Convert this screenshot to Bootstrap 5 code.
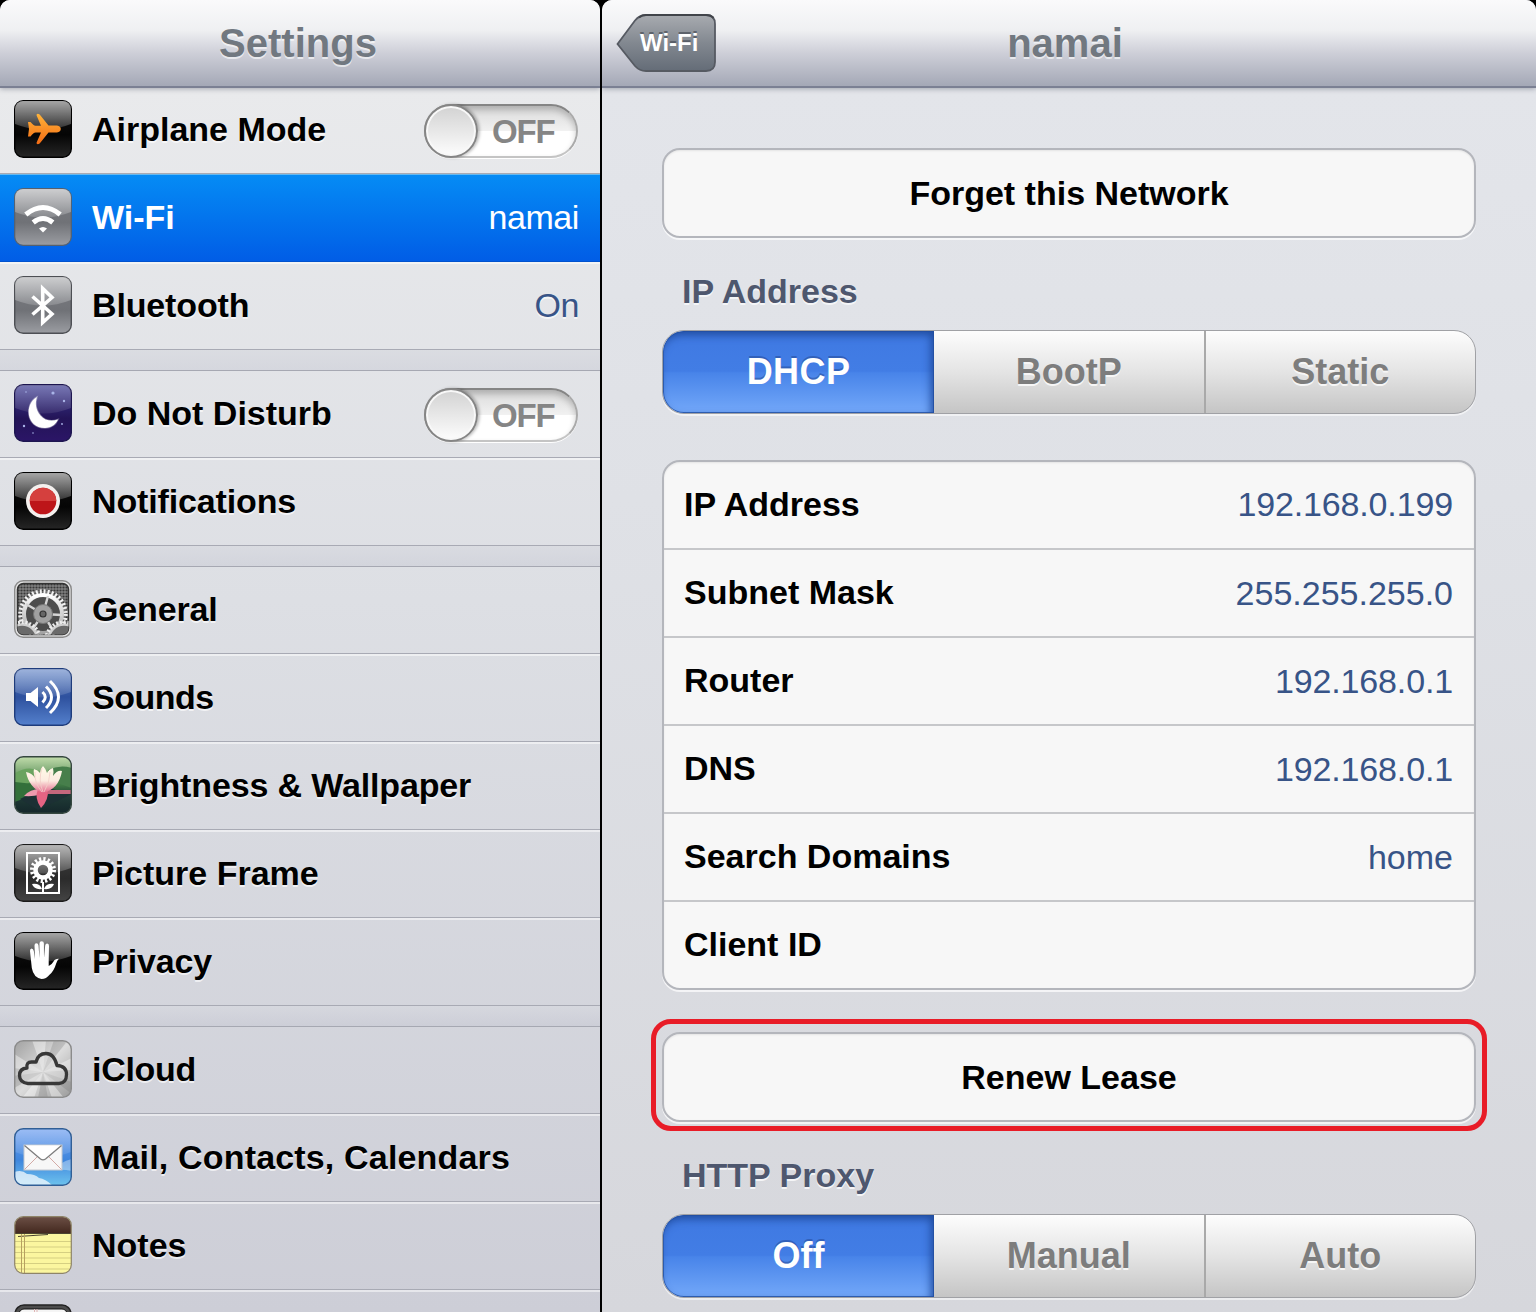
<!DOCTYPE html>
<html lang="en">
<head>
<meta charset="utf-8">
<meta name="viewport" content="width=device-width, initial-scale=1">
<title>Settings</title>
<link href="https://cdn.jsdelivr.net/npm/bootstrap@5.3.0/dist/css/bootstrap.min.css" rel="stylesheet">
<style>
body{font-family:"Liberation Sans",Arial,sans-serif;font-size:34px;line-height:40px;color:#000;background:#000;height:1312px;overflow:hidden}
.app-shell{height:1312px;gap:2px}
.side-pane{width:600px;background:linear-gradient(#e9eaec 88px,#dddfe4 600px,#cdced7 1312px)}
.main-pane{background:linear-gradient(#e3e5ea 88px,#dfe1e6 500px,#d6d7dc 1312px)}
.side-pane,.main-pane{border-radius:10px 10px 0 0;overflow:hidden}
.title-bar{height:88px;background:linear-gradient(#fafafb 0,#eff0f2 30px,#cfd0d9 52px,#a4a8b6 86px);border-bottom:2px solid #7b8093;box-shadow:0 1px 5px rgba(60,65,85,.4);z-index:2;font-size:40px;color:#717880;text-shadow:0 2px 0 rgba(255,255,255,.6)}
.back-btn{left:14px;top:13px;width:102px;height:60px;color:#fff;font-size:24px;text-shadow:0 -2px 0 rgba(60,65,75,.6)}
.back-btn svg{left:0;top:0}
.back-btn span{left:24px;top:10px}
.menu-group{border-top:1px solid #a6a8b2}
.menu-group:first-child{border-top:0;margin-top:-2px}
.menu-row{height:88px;padding:0 21px 0 14px;border-bottom:1px solid #a8aab4;box-shadow:inset 0 2px 0 rgba(255,255,255,.5);text-shadow:0 2px 0 rgba(255,255,255,.65)}
.menu-group:not(:first-child) .menu-row:first-child{height:87px;box-shadow:none}
.menu-row>svg{width:58px;height:58px}
.menu-row{padding-bottom:1px}
.menu-group:not(:first-child) .menu-row:first-child{padding-bottom:2px}
.menu-row.picked{background:linear-gradient(#058cf5,#015de6);border-bottom-color:#0152ce;box-shadow:inset 0 1px 0 #67b9ee;color:#fff;text-shadow:none}
.menu-row.picked .row-val{color:#fff}
.menu-gap{height:20px;background:linear-gradient(rgba(215,217,223,.7),rgba(195,197,209,.42))}
.row-val{color:#385487}
.menu-row .row-val{letter-spacing:-.4px}
.pill{width:154px;height:54px;border-radius:27px;border:2px solid #aaa;border-top-color:#858585;border-bottom-color:#c4c4c4;background:linear-gradient(#dadada,#f1f1f1 49%,#fff 51%);box-shadow:inset 0 4px 6px rgba(0,0,0,.2),0 1px 0 #fff;margin:4px 1px 0 0;line-height:52px;color:#858585;font-size:33px;letter-spacing:-1.2px;padding-left:66px;text-shadow:none}
.pill-knob{left:-2px;top:-2px;width:54px;height:54px;border-radius:50%;background:linear-gradient(#d2d2d2,#fdfdfd);border:2px solid #858585;box-shadow:inset 0 0 0 2px #f8f8f8,2px 0 3px rgba(0,0,0,.25)}
.content-col{padding:60px 60px 0}
.cell-box{background:#f7f7f7;border:2px solid #b4b6bc;border-radius:18px;box-shadow:0 2px 0 rgba(255,255,255,.7),inset 0 1px 2px rgba(0,0,0,.08)}
.one-btn{height:90px}
.sec-title{font-size:34px;line-height:40px;color:#4e576e;text-shadow:0 2px 0 #f4f5f7;height:40px;padding-left:20px;margin-top:33px}
.proxy-title{margin-top:24px}
.sec-title+.seg-bar{margin-top:19px}
.seg-bar+.info-list{margin-top:46px}
.seg-bar{height:84px;border-radius:22px;border:1px solid #a0a1a5;box-shadow:0 2px 0 rgba(255,255,255,.55);overflow:hidden;font-size:36px;background:linear-gradient(#fdfdfd,#e4e4e4 50%,#c5c5c5)}
.seg-item{flex:1 1 0;color:#7d7d7d;text-shadow:0 2px 0 #f6f6f6}
.seg-item.on{flex:0 0 271px;color:#fff;background:linear-gradient(#3f79e2,#427de5 49%,#4884e9 51%,#73a8f9);box-shadow:inset -3px 4px 8px #204c9f,inset 0 0 0 1px #315fb1;text-shadow:0 -2px 0 rgba(35,70,145,.5);border-radius:21px 0 0 21px}
.seg-item:last-child{border-left:2px solid #a9a9a9}
.wide-cap{letter-spacing:.4px}
.info-list{height:530px}
.info-row{height:88px;padding:0 21px 1px 20px;border-bottom:2px solid #c6c7ca}
.info-row b{margin-top:-1px}
.info-row:first-child{padding-bottom:2px}
.info-row:last-child{border:0;height:86px}
.ring-mark{border:5px solid #e81c27;border-radius:20px;padding:8px 6px 4px;margin:29px -11px 0}
.snug{letter-spacing:-.14px}
.loose{letter-spacing:.17px}
</style>
<script src="https://cdn.jsdelivr.net/npm/bootstrap@5.3.0/dist/js/bootstrap.bundle.min.js"></script>
</head>
<body>
<svg width="0" height="0" class="position-absolute">
<defs>
<linearGradient id="shine" x1="0" y1="0" x2="0" y2="1"><stop offset="0" stop-color="#fff" stop-opacity=".62"/><stop offset="1" stop-color="#fff" stop-opacity=".16"/></linearGradient>
<linearGradient id="gGray" x1="0" y1="0" x2="0" y2="1"><stop offset="0" stop-color="#7b7d82"/><stop offset=".6" stop-color="#707277"/><stop offset="1" stop-color="#9b9da2"/></linearGradient>
<linearGradient id="gNight" x1="0" y1="0" x2="0" y2="1"><stop offset="0" stop-color="#3c3c94"/><stop offset=".6" stop-color="#231457"/><stop offset="1" stop-color="#2b1567"/></linearGradient>
<linearGradient id="gSound" x1="0" y1="0" x2="0" y2="1"><stop offset="0" stop-color="#5a7fc4"/><stop offset=".5" stop-color="#2e519e"/><stop offset="1" stop-color="#5480cc"/></linearGradient>
<linearGradient id="gPlane" x1="0" y1="0" x2="0" y2="1"><stop offset="0" stop-color="#ffb43a"/><stop offset="1" stop-color="#f36b14"/></linearGradient>
<linearGradient id="gBlack" x1="0" y1="0" x2="0" y2="1"><stop offset="0" stop-color="#151515"/><stop offset=".6" stop-color="#050505"/><stop offset="1" stop-color="#262626"/></linearGradient>
<linearGradient id="gFrame" x1="0" y1="0" x2="0" y2="1"><stop offset="0" stop-color="#444"/><stop offset=".6" stop-color="#2b2b2b"/><stop offset="1" stop-color="#444"/></linearGradient>
<linearGradient id="gSky" x1="0" y1="0" x2="0" y2="1"><stop offset="0" stop-color="#6f9ff0"/><stop offset=".55" stop-color="#3f86dd"/><stop offset="1" stop-color="#6fc4ee"/></linearGradient>
<linearGradient id="gGear" x1="0" y1="0" x2="0" y2="1"><stop offset="0" stop-color="#fff"/><stop offset="1" stop-color="#a2a2a2"/></linearGradient>
<linearGradient id="gWood" x1="0" y1="0" x2="0" y2="1"><stop offset="0" stop-color="#6d5147"/><stop offset="1" stop-color="#44291f"/></linearGradient>
<linearGradient id="gPetal" x1="0" y1="0" x2="0" y2="1"><stop offset="0" stop-color="#fffbe8"/><stop offset=".55" stop-color="#fcebe0"/><stop offset="1" stop-color="#e3668a"/></linearGradient>
<linearGradient id="gPond" x1="0" y1="0" x2="0" y2="1"><stop offset="0" stop-color="#c5dfae"/><stop offset=".5" stop-color="#3f7a44"/><stop offset=".7" stop-color="#1f3a36"/><stop offset="1" stop-color="#14262a"/></linearGradient>
<linearGradient id="gBack" x1="0" y1="0" x2="0" y2="1"><stop offset="0" stop-color="#a8abb0"/><stop offset=".5" stop-color="#828890"/><stop offset="1" stop-color="#646c77"/></linearGradient>
<linearGradient id="gMetal" x1="0" y1="0" x2="1" y2="1"><stop offset="0" stop-color="#a0a0a0"/><stop offset=".5" stop-color="#dcdcdc"/><stop offset="1" stop-color="#999"/></linearGradient>
<pattern id="mesh" width="3" height="3" patternUnits="userSpaceOnUse"><rect width="3" height="3" fill="#808080"/><circle cx="1.5" cy="1.5" r="1.1" fill="#383838"/></pattern>
<clipPath id="tile"><rect x="1" y="1" width="56" height="56" rx="8"/></clipPath>
<clipPath id="gearTile"><rect x="3.5" y="3.5" width="51" height="51" rx="6"/></clipPath>
<path id="gloss" d="M1 1H57V24Q29 35 1 24Z" fill="url(#shine)" clip-path="url(#tile)"/>
</defs>
</svg>
<div class="app-shell d-flex">
<aside class="side-pane flex-shrink-0">
<header class="title-bar position-relative d-flex align-items-center justify-content-center fw-bold pe-1">Settings</header>
<nav>
<div class="menu-group">
<div class="menu-row d-flex align-items-center">
<svg viewBox="0 0 58 58"><rect x=".7" y=".7" width="56.6" height="56.6" rx="8.5" fill="url(#gBlack)" stroke="#000" stroke-width="1.4"/><use href="#gloss"/><path d="M14 22h2.500q3 3.500 5 3.700h5.500L22.600 15.500q-.4-1.700 1.200-1.700 1.700 0 2.700 1.700L34.500 25.500H43q3.800.6 3.800 3.500t-3.800 3.500H34.500L26.500 42.500q-1 1.700-2.700 1.700-1.600 0-1.200-1.700L27 32.500h-5.500q-2 .2-5 4H14l1-7.500Z" fill="url(#gPlane)"/></svg>
<span class="fw-bold ms-3 ps-1 flex-grow-1">Airplane Mode</span><div class="pill position-relative fw-bold"><div class="pill-knob position-absolute"></div>OFF</div></div>
<div class="menu-row picked d-flex align-items-center">
<svg viewBox="0 0 58 58"><rect x=".7" y=".7" width="56.6" height="56.6" rx="8.5" fill="url(#gGray)" stroke="#55606e" stroke-width="1.2"/><use href="#gloss"/><g fill="none" stroke="#fff" stroke-width="5"><path d="M11.800 26.500Q29 12.500 46.200 26.500"/><path d="M19.200 34.500Q29 26.500 38.800 34.500"/></g><path d="M25 40.500q4-3 8 0L29 44.500Z" fill="#fff"/></svg>
<span class="fw-bold ms-3 ps-1 flex-grow-1">Wi-Fi</span><span class="row-val">namai</span></div>
<div class="menu-row d-flex align-items-center">
<svg viewBox="0 0 58 58"><rect x=".7" y=".7" width="56.6" height="56.6" rx="8.5" fill="url(#gGray)" stroke="#4d4f54" stroke-width="1.4"/><use href="#gloss"/><path d="M18.500 20.500L38 38l-9.300 8.500v-34L38 21.500 18.500 38.500" fill="none" stroke="#fff" stroke-width="3.600"/></svg>
<span class="fw-bold ms-3 ps-1 flex-grow-1 snug">Bluetooth</span><span class="row-val">On</span></div>
</div>
<div class="menu-gap"></div>
<div class="menu-group">
<div class="menu-row d-flex align-items-center">
<svg viewBox="0 0 58 58"><rect x=".7" y=".7" width="56.6" height="56.6" rx="8.500" fill="url(#gNight)" stroke="#1d1650" stroke-width="1.4"/><path d="M1 1H57V24Q29 35 1 24Z" fill="url(#shine)" opacity=".5" clip-path="url(#tile)"/><g fill="#a9b4e8"><circle cx="39" cy="9" r="1.600"/><circle cx="50" cy="17" r="1.200"/><circle cx="12" cy="8" r=".8"/><circle cx="10" cy="42" r="1.200"/><circle cx="48" cy="40" r=".9"/><circle cx="19" cy="49" r=".8"/></g><path d="M23 13C10 20 12 44 31 44c6.500 0 11-4 13-8.500-6 2-13 1.500-17.500-4C21.500 25.500 21 19 23 13Z" fill="#fff" stroke="#fff" stroke-opacity=".35" stroke-width="1.500"/></svg>
<span class="fw-bold ms-3 ps-1 flex-grow-1">Do Not Disturb</span><div class="pill position-relative fw-bold"><div class="pill-knob position-absolute"></div>OFF</div></div>
<div class="menu-row d-flex align-items-center">
<svg viewBox="0 0 58 58"><rect x=".7" y=".7" width="56.6" height="56.6" rx="8.500" fill="url(#gBlack)" stroke="#000" stroke-width="1.4"/><use href="#gloss"/><circle cx="29" cy="29" r="17" fill="#f4f0ee"/><circle cx="29" cy="29" r="13.300" fill="#bd1519"/><path d="M15.700 29a13.300 13.300 0 0 1 26.600 0Z" fill="#d5403e"/></svg>
<span class="fw-bold ms-3 ps-1 snug">Notifications</span></div>
</div>
<div class="menu-gap"></div>
<div class="menu-group">
<div class="menu-row d-flex align-items-center">
<svg viewBox="0 0 58 58"><rect x=".7" y=".7" width="56.6" height="56.6" rx="8.500" fill="#e2e2e2" stroke="#8b8b8b" stroke-width="1.400"/><rect x="3.500" y="3.500" width="51" height="51" rx="6" fill="url(#mesh)" stroke="#333" stroke-width="1.500"/><g clip-path="url(#gearTile)"><circle cx="29" cy="34" r="18" fill="#4d4d4d"/><circle cx="29" cy="34" r="22.500" fill="none" stroke="#f2f2f2" stroke-width="4.500" stroke-dasharray="1.927 2"/><circle cx="29" cy="34" r="19" fill="none" stroke="url(#gGear)" stroke-width="4"/><g stroke="#d5d5d5" stroke-width="2.400"><path d="M29 34 34 16M29 34 48 35M29 34 39 50M29 34 18 50M29 34 12 24"/></g><circle cx="29" cy="34" r="9.500" fill="#a0a0a0" stroke="#777"/><circle cx="29" cy="34" r="3" fill="#666" stroke="#333" stroke-width="1.200"/><g fill="#6a6a6a" stroke="#d0d0d0" stroke-width="2.500"><circle cx="8" cy="60" r="15.500"/><circle cx="50" cy="60" r="15.500"/></g><g fill="none" stroke="#eee" stroke-width="3.500" stroke-dasharray="1.900 1.917"><circle cx="8" cy="60" r="18"/><circle cx="50" cy="60" r="18"/></g></g></svg>
<span class="fw-bold ms-3 ps-1 snug">General</span></div>
<div class="menu-row d-flex align-items-center">
<svg viewBox="0 0 58 58"><rect x=".7" y=".7" width="56.6" height="56.6" rx="8.500" fill="url(#gSound)" stroke="#1e3c7c" stroke-width="1.400"/><path d="M1 1H57V24Q29 35 1 24Z" fill="url(#shine)" opacity=".65" clip-path="url(#tile)"/><path d="M12 25h4.500L24 19v20l-7.500-6H12Z" fill="#fff"/><g fill="none" stroke="#fff" stroke-width="3"><path d="M28.500 24q5.500 5 0 10.500"/><path d="M32 18.500q11 10.500 0 21.500"/><path d="M36 13q17 16 0 32"/></g></svg>
<span class="fw-bold ms-3 ps-1" style="letter-spacing:-.5px">Sounds</span></div>
<div class="menu-row d-flex align-items-center">
<svg viewBox="0 0 58 58"><g clip-path="url(#tile)"><rect width="58" height="58" fill="url(#gPond)"/><path d="M0 18Q14 8 28 16L30 20 0 34Z" fill="#6aa35f"/><path d="M34 14q12-6 24-2v20l-18-6Z" fill="#477f4b"/><path d="M0 26 20 28 12 42 0 46Z" fill="#33703a"/><path d="M6 43 30 31 58 38 24 54Z" fill="#1c3034"/><path d="M34 34 58 34V38L34 38Z" fill="#c4677c"/><path d="M10 40q6-7 16-7l8 2q-8 6-24 5Z" fill="#ee9aae"/><path d="M24 33q-4 9 3 19 8-8 7-19Z" fill="#e56483"/><path d="M29 37Q15 32 12 16q6 1 9 6-2-6-1-9 4 1 6 4 0-4 3-7 3 3 4 7 2-4 6-5 1 4 0 8 4-6 9-5-3 18-19 22Z" fill="url(#gPetal)"/><path d="M28 36Q20 27 21 16M29 36Q24 24 28 12M30 36Q36 26 36 16" fill="none" stroke="#f3cfc8" stroke-width=".8"/></g><rect x=".7" y=".7" width="56.6" height="56.6" rx="8.500" fill="none" stroke="#35473f" stroke-width="1.400"/></svg>
<span class="fw-bold ms-3 ps-1 snug">Brightness &amp; Wallpaper</span></div>
<div class="menu-row d-flex align-items-center">
<svg viewBox="0 0 58 58"><rect x=".7" y=".7" width="56.6" height="56.6" rx="8.500" fill="url(#gFrame)" stroke="#1b1b1b" stroke-width="1.400"/><use href="#gloss"/><rect x="13" y="9" width="32" height="40" fill="none" stroke="#fff" stroke-width="2"/><circle cx="29" cy="26" r="7.500" fill="none" stroke="#fff" stroke-width="4.500"/><circle cx="29" cy="26" r="11" fill="none" stroke="#fff" stroke-width="4" stroke-dasharray="2.200 2.120"/><path d="M29 38V49" stroke="#fff" stroke-width="2"/><path d="M18 40q8-1 10 5-8 1-10-5ZM40 40q-8-1-10 5 8 1 10-5Z" fill="#fff"/></svg>
<span class="fw-bold ms-3 ps-1">Picture Frame</span></div>
<div class="menu-row d-flex align-items-center">
<svg viewBox="0 0 58 58"><rect x=".7" y=".7" width="56.6" height="56.6" rx="8.500" fill="url(#gBlack)" stroke="#000" stroke-width="1.400"/><use href="#gloss"/><path d="M17.800 36 16 19q-.1-2.500 1.600-2.500t2.200 2.500L21 27 20.500 13.500q0-2.300 1.900-2.300t2.100 2.300L25.500 26V11.500q0-2.200 2.200-2.200t2.200 2.200L30 26l1.200-12.500q.3-2 2.100-1.900t1.700 2.300L34.700 29v5q3.300-1.500 4.800-4.500t5.300-2.800q-1.500 1.500-2.800 5.300-2 7-6.500 10.800-3.200 4.200-8 4.200-8-1.500-9.700-11Z" fill="#fff"/></svg>
<span class="fw-bold ms-3 ps-1 snug">Privacy</span></div>
</div>
<div class="menu-gap"></div>
<div class="menu-group">
<div class="menu-row d-flex align-items-center">
<svg viewBox="0 0 58 58"><g clip-path="url(#tile)"><rect width="58" height="58" fill="url(#gMetal)"/><g fill="#fff" opacity=".4"><path d="M29 32 18 0H32ZM29 32 0 14V28ZM29 32 58 18V30ZM29 32 8 58H20ZM29 32 38 58H50Z"/></g><g fill="#777" opacity=".28"><path d="M29 32 40 0H54ZM29 32 0 36V48ZM29 32 58 42V54ZM29 32 24 58H34Z"/></g></g><rect x=".7" y=".7" width="56.600" height="56.600" rx="8.500" fill="none" stroke="#8b8b8b" stroke-width="1.400"/><path d="M14 43.500Q5.500 42.500 5.500 35.500T13 28Q12 22 17.500 22T22 22Q24 13.500 32 13.500T43 25.500Q52.500 26 52.500 34.500T45 43.500Z" fill="#ddd" fill-opacity=".45" stroke="#383838" stroke-width="3.300" stroke-linejoin="round"/></svg>
<span class="fw-bold ms-3 ps-1" style="letter-spacing:-.3px">iCloud</span></div>
<div class="menu-row d-flex align-items-center">
<svg viewBox="0 0 58 58"><g clip-path="url(#tile)"><rect width="58" height="58" fill="url(#gSky)"/><path d="M1 1H57V24Q29 35 1 24Z" fill="url(#shine)" opacity=".5"/><g fill="#fff" opacity=".7"><path d="M0 44q8-3 13 2 8 0 12 4 7 1 14 8H0Z"/><path d="M41 42q6-9 17-11v12q-8-2-17-1Z" opacity=".5"/></g></g><rect x=".7" y=".7" width="56.6" height="56.6" rx="8.500" fill="none" stroke="#315f96" stroke-width="1.400"/><rect x="10" y="17" width="38" height="25" fill="#f7f7f7" stroke="#c2c7cf"/><path d="M10.500 41.500 23 29M47.500 41.500 35 29" stroke="#d3aaa6"/><path d="M10.500 17.500 26.500 31q2.500 1.800 5 0L47.500 17.500" fill="#fff" stroke="#7d7d7d" stroke-width="1.300"/></svg>
<span class="fw-bold ms-3 ps-1 loose">Mail, Contacts, Calendars</span></div>
<div class="menu-row d-flex align-items-center">
<svg viewBox="0 0 58 58"><g clip-path="url(#tile)"><rect width="58" height="58" fill="#fbf69f"/><rect width="58" height="17" fill="url(#gWood)"/><path d="M1 17.500H57M4 20.500 34 18.500" stroke="#4b4430" stroke-width="1.200"/><path d="M1 25.500H57M1 31H57M1 36.500H57M1 42H57M1 47.500H57M1 53H57" stroke="#d5cf82"/><path d="M7.500 18V57M10.500 18V57" stroke="#b7a160"/></g><rect x=".7" y=".7" width="56.6" height="56.6" rx="8.500" fill="none" stroke="#8e8468" stroke-width="1.200"/></svg>
<span class="fw-bold ms-3 ps-1">Notes</span></div>
<div class="menu-row d-flex align-items-center">
<svg viewBox="0 0 58 58"><rect x="1" y="1" width="56" height="56" rx="9" fill="#4c4c4c" stroke="#222" stroke-width="1.500"/><rect x="5" y="5" width="48" height="50" rx="5" fill="#f5f5f5" stroke="#111"/><path d="M20.500 5V55M23 5V55" stroke="#dfb5b5"/></svg>
</div>
</div>
</nav>
</aside>
<main class="main-pane flex-grow-1">
<header class="title-bar position-relative d-flex align-items-center justify-content-center fw-bold">
<a class="back-btn position-absolute text-decoration-none"><svg class="position-absolute" width="102" height="60" viewBox="0 0 102 60"><path d="M1.500 31 19 7.500Q23.500 2 30 2H90Q99 2 99 11V49Q99 58 90 58H30Q23.500 58 19 53Z" fill="url(#gBack)" stroke="#565a62" stroke-width="1.800"/><path d="M23 4.500Q26 2 30 2H90Q95 2 97.500 5" fill="none" stroke="#41444a" stroke-width="2"/></svg><span class="position-absolute">Wi-Fi</span></a>
<span class="me-2">namai</span></header>
<div class="content-col">
<div class="cell-box one-btn d-flex align-items-center justify-content-center fw-bold">Forget this Network</div>
<h2 class="sec-title fw-bold mb-0">IP Address</h2>
<div class="seg-bar d-flex fw-bold">
<div class="seg-item on d-flex align-items-center justify-content-center"><span class="wide-cap">DHCP</span></div>
<div class="seg-item d-flex align-items-center justify-content-center">BootP</div>
<div class="seg-item d-flex align-items-center justify-content-center">Static</div>
</div>
<div class="cell-box info-list">
<div class="info-row d-flex align-items-center justify-content-between"><b>IP Address</b><span class="row-val snug">192.168.0.199</span></div>
<div class="info-row d-flex align-items-center justify-content-between"><b>Subnet Mask</b><span class="row-val">255.255.255.0</span></div>
<div class="info-row d-flex align-items-center justify-content-between"><b>Router</b><span class="row-val snug">192.168.0.1</span></div>
<div class="info-row d-flex align-items-center justify-content-between"><b>DNS</b><span class="row-val snug">192.168.0.1</span></div>
<div class="info-row d-flex align-items-center justify-content-between"><b>Search Domains</b><span class="row-val">home</span></div>
<div class="info-row d-flex align-items-center"><b>Client ID</b></div>
</div>
<div class="ring-mark"><div class="cell-box one-btn d-flex align-items-center justify-content-center fw-bold">Renew Lease</div></div>
<h2 class="sec-title proxy-title fw-bold mb-0">HTTP Proxy</h2>
<div class="seg-bar d-flex fw-bold">
<div class="seg-item on d-flex align-items-center justify-content-center">Off</div>
<div class="seg-item d-flex align-items-center justify-content-center">Manual</div>
<div class="seg-item d-flex align-items-center justify-content-center">Auto</div>
</div>
</div>
</main>
</div>
</body>
</html>
